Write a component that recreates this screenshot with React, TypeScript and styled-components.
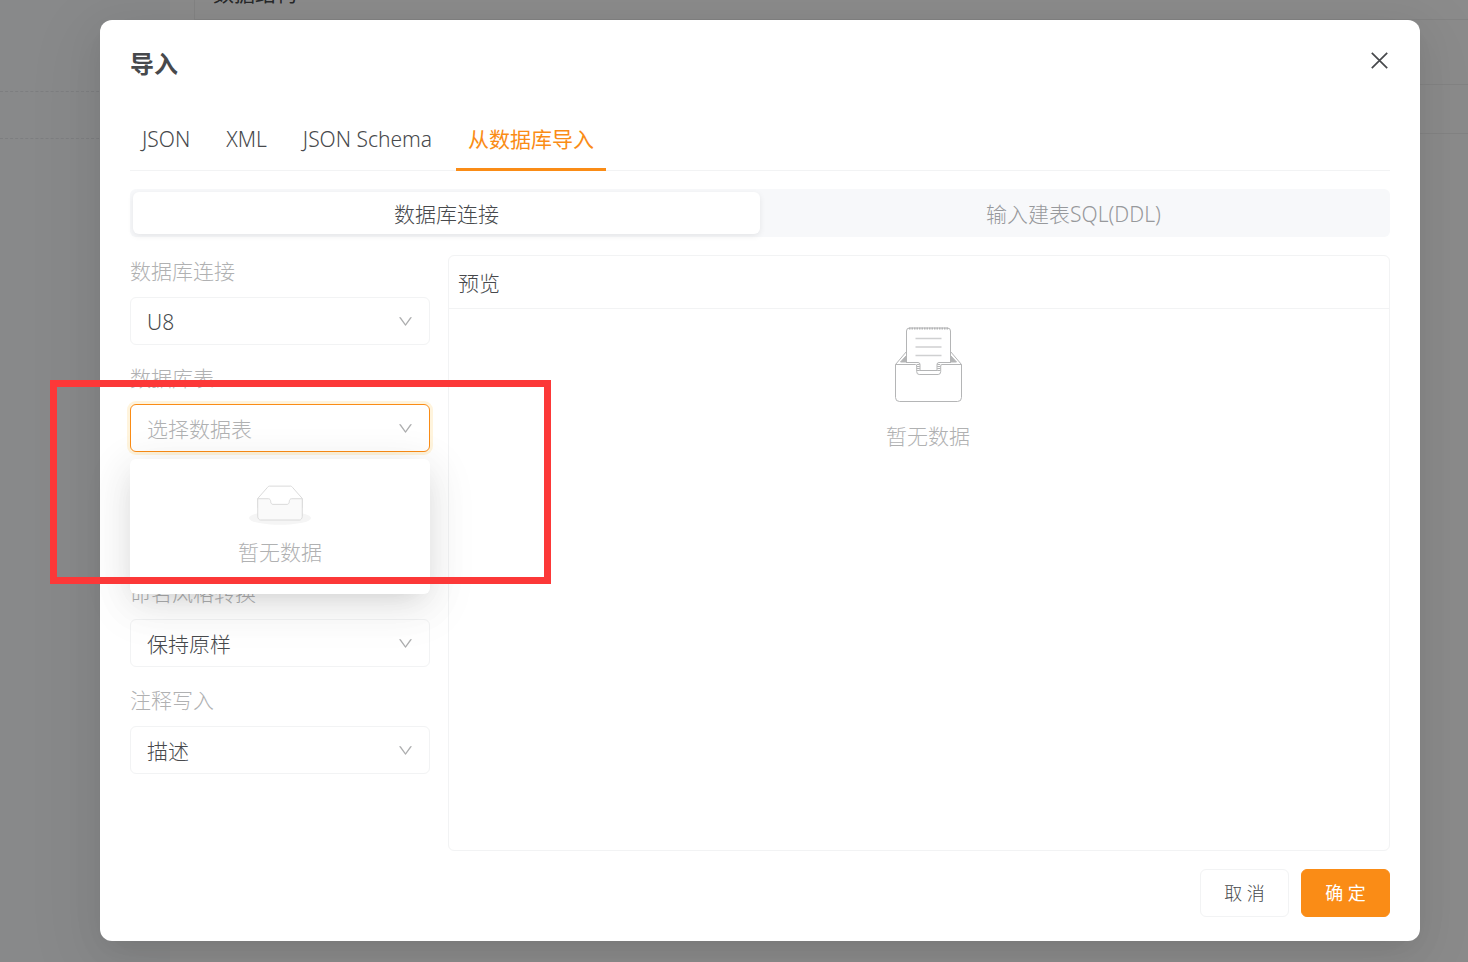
import React, { useState } from "react";
import styled, { createGlobalStyle, css } from "styled-components";

const color = {
  text: "#47494c",
  muted: "#b0b1b2",
  line: "#f2f3f4",
  accent: "#fa8c16",
  track: "#f7f8fa",
};

const GlobalStyle = createGlobalStyle`
  *, *::before, *::after { box-sizing: border-box; }
  body {
    margin: 0;
    color: ${color.text};
    font-family: "Noto Sans", "Noto Sans CJK SC", sans-serif;
    font-size: 21px;
    font-weight: 300;
    line-height: 32px;
  }
  button, select, input { font: inherit; color: inherit; }
`;

const Page = styled.div`
  position: relative;
  display: flex;
  min-height: 100vh;
  overflow: hidden;
`;

const Sidebar = styled.aside`
  flex: none;
  width: 170px;
  padding-top: 91px;
  background: #f7f9fc;
`;

const SidebarRow = styled.div`
  height: 47px;
  border-top: 1px dashed #e4e6e9;

  & + & { height: 1px; }
`;

const Main = styled.main`
  flex: 1;
  padding: 0 0 24px 24px;
  background: #fefefe;
`;

const Sheet = styled.section`
  height: 100%;
  border-left: 1px solid #efefef;
`;

const SheetTitle = styled.div`
  display: flex;
  align-items: flex-end;
  height: 20px;
  padding: 0 0 10px 18px;
  font-weight: 400;
  border-bottom: 1px solid #efefef;
`;

const SheetRow = styled.div<{ $tall?: boolean }>`
  height: ${(p) => (p.$tall ? 65 : 49)}px;
  border-bottom: 1px solid #efefef;
`;

const Overlay = styled.div`
  position: absolute;
  inset: 0;
  display: flex;
  padding: 20px 48px 21px 100px;
  background: rgba(0, 0, 0, 0.45);
`;

const Dialog = styled.div`
  flex: 1;
  display: flex;
  flex-direction: column;
  padding: 29px 30px 24px;
  border-radius: 12px;
  background: #fff;
  box-shadow: 0 9px 24px -12px rgba(0, 0, 0, 0.1), 0 12px 42px rgba(0, 0, 0, 0.06),
    0 18px 72px 24px rgba(0, 0, 0, 0.03);
`;

const DialogHeader = styled.header`
  display: flex;
  justify-content: space-between;
  align-items: flex-start;
  height: 30px;
`;

const Title = styled.h1`
  margin: 0;
  font-size: 24px;
  font-weight: 700;
  line-height: 30px;
`;

const CloseButton = styled.button`
  display: flex;
  padding: 3px 2px;
  border: 0;
  background: none;
`;

const Tabs = styled.div`
  display: flex;
  gap: 12px;
  margin-top: 30px;
  box-shadow: inset 0 -1px ${color.line};
`;

const Tab = styled.button<{ $active: boolean }>`
  padding: 14px 12px 13px;
  border: 0;
  border-bottom: 3px solid ${(p) => (p.$active ? color.accent : "transparent")};
  background: none;
  line-height: 32px;
  ${(p) => p.$active && css`color: ${color.accent}; font-weight: 400;`}
`;

const Segments = styled.div`
  display: flex;
  margin-top: 18px;
  padding: 3px;
  border-radius: 6px;
  background: ${color.track};
`;

const Segment = styled.label<{ $active: boolean }>`
  flex: 1 1 0;
  display: flex;
  justify-content: center;
  align-items: center;
  height: 42px;
  padding-top: 2px;
  border-radius: 6px;
  color: #97999c;
  ${(p) =>
    p.$active &&
    css`
      color: ${color.text};
      background: #fff;
      box-shadow: 0 2px 6px rgba(0, 0, 0, 0.08);
    `}

  input { position: absolute; opacity: 0; pointer-events: none; }
`;

const Body = styled.div`
  flex: 1;
  display: flex;
  gap: 18px;
  margin-top: 18px;
`;

const Form = styled.form`
  flex: none;
  width: 300px;
`;

const Field = styled.div`
  position: relative;
  margin-bottom: 17px;
`;

const FieldLabel = styled.label`
  display: block;
  padding-bottom: 10px;
  color: ${color.muted};
`;

const FieldGap = styled.div`
  height: 108px;
`;

const SelectBox = styled.div<{ $open?: boolean }>`
  display: flex;
  align-items: center;
  height: 48px;
  border: 1px solid ${(p) => (p.$open ? color.accent : color.line)};
  border-radius: 6px;
  background: #fff;
  ${(p) => p.$open && css`box-shadow: 0 0 0 3px #fff4dd;`}

  svg { flex: none; margin: 0 16px 0 -31px; pointer-events: none; }
`;

const Select = styled.select<{ $placeholder?: boolean }>`
  flex: 1;
  height: 46px;
  padding: 1px 40px 0 16px;
  border: 0;
  outline: 0;
  appearance: none;
  background: none;
  color: ${(p) => (p.$placeholder ? color.muted : color.text)};
`;

const Dropdown = styled.div`
  position: absolute;
  z-index: 1;
  top: 100%;
  left: 0;
  right: 0;
  display: flex;
  flex-direction: column;
  align-items: center;
  gap: 11px;
  height: 135px;
  margin-top: 7px;
  padding-top: 26px;
  border-radius: 6px;
  color: ${color.muted};
  background: #fff;
  box-shadow: 0 9px 24px -12px rgba(0, 0, 0, 0.12), 0 9px 42px rgba(0, 0, 0, 0.08),
    0 12px 48px 12px rgba(0, 0, 0, 0.04);
`;

const Preview = styled.section`
  flex: 1;
  border: 1px solid ${color.line};
  border-radius: 6px;
`;

const PreviewHeader = styled.h2`
  margin: 0;
  padding: 11px 9px 9px;
  border-bottom: 1px solid ${color.line};
  font-size: 21px;
  font-weight: 300;
  line-height: 32px;
`;

const PreviewEmpty = styled.div`
  display: flex;
  flex-direction: column;
  align-items: center;
  gap: 17px;
  padding: 18px 0 0 18px;
  color: ${color.muted};
`;

const Footer = styled.footer`
  display: flex;
  justify-content: flex-end;
  gap: 12px;
  margin-top: 18px;
`;

const Button = styled.button<{ $primary?: boolean }>`
  width: 89px;
  height: 48px;
  padding: 0;
  border: 1px solid ${(p) => (p.$primary ? color.accent : color.line)};
  border-radius: 6px;
  background: ${(p) => (p.$primary ? color.accent : "#fff")};
  color: ${(p) => (p.$primary ? "#fff" : color.text)};
  font-size: 18px;
  font-weight: ${(p) => (p.$primary ? 400 : 300)};
`;

const Highlight = styled.div`
  position: absolute;
  z-index: 2;
  top: 380px;
  left: 50px;
  width: 501px;
  height: 204px;
  border: 7px solid #fc3838;
  pointer-events: none;
`;

const Chevron = () => (
  <svg width="15" height="15" viewBox="64 64 896 896" fill="#adaeaf" aria-hidden="true">
    <path d="M884 256h-75c-5.1 0-9.9 2.5-12.9 6.6L512 654.2 227.9 262.6c-3-4.1-7.8-6.6-12.9-6.6h-75c-6.5 0-10.3 7.4-6.5 12.7l352.6 486.1c12.8 17.6 39 17.6 51.7 0l352.6-486.1c3.9-5.3.1-12.7-6.4-12.7z" />
  </svg>
);

const CloseIcon = () => (
  <svg width="17" height="17" viewBox="0 0 17 17" fill="none" stroke="#47494c" strokeWidth="1.7" aria-hidden="true">
    <path d="M0.8 0.8l15.4 15.4M16.2 0.8L0.8 16.2" />
  </svg>
);

const TrayIcon = () => (
  <svg width="62" height="40" viewBox="0 0 64 41" aria-hidden="true">
    <g transform="translate(0 1)" fill="none">
      <ellipse fill="#f5f5f5" cx="32" cy="33" rx="32" ry="7" />
      <g stroke="#d9d9d9">
        <path d="M55 12.76L44.854 1.258C44.367.474 43.656 0 42.907 0H21.093c-.749 0-1.46.474-1.947 1.257L9 12.761V22h46v-9.24z" fill="#fff" />
        <path d="M41.613 15.931c0-1.605.994-2.93 2.227-2.931H55v18.137C55 33.26 53.68 35 52.05 35h-40.1C10.32 35 9 33.259 9 31.137V13h11.16c1.233 0 2.227 1.323 2.227 2.928v.022c0 1.605 1.005 2.901 2.237 2.901h14.752c1.232 0 2.237-1.308 2.237-2.913v-.007z" fill="#fafafa" />
      </g>
    </g>
  </svg>
);

const PaperTrayIcon = () => (
  <svg width="68" height="76" viewBox="0 0 68 76" fill="none" stroke="#b4b5b6" aria-hidden="true">
    <path d="M12.5 24.5L1.5 37.5V70.5a4 4 0 0 0 4 4h58a4 4 0 0 0 4-4V37.5L56.500 24.5" />
    <path d="M12.5 36V4q0-3 3-3h38q3 0 3 3v32" />
    <path d="M15 1.5h39" strokeWidth="2" strokeDasharray="1.5 1" />
    <path d="M6.500 35l6-6.500v6.500zM62.500 35l-6-6.500v6.500z" fill="#b4b5b6" />
    <path d="M21.500 11.500h26M21.500 20h26M21.500 28.500h26" stroke="#cfd0d1" strokeWidth="1.400" />
    <path d="M1.500 37.500h20q1.200 0 1.200 1.500v5.500q0 3 2.500 3h19q2.500 0 2.500-3v-5.500q0-1.500 1.200-1.500h19.600" />
    <path d="M12.500 35.500h11.500q2 0 2 2v6h17v-6q0-2 2-2h11.500" />
    <path d="M24.300 37v8M44.700 37v8" strokeWidth="3" strokeDasharray="1 1" />
  </svg>
);

const tabs = ["JSON", "XML", "JSON Schema", "从数据库导入"];
const segments = ["数据库连接", "输入建表SQL(DDL)"];

type SelectFieldProps = {
  id: string;
  label: string;
  value: string;
  open?: boolean;
};

const SelectField = ({ id, label, value, open }: SelectFieldProps) => (
  <Field>
    <FieldLabel htmlFor={id}>{label}</FieldLabel>
    <SelectBox $open={open}>
      <Select id={id} $placeholder={open}>
        <option>{value}</option>
      </Select>
      <Chevron />
    </SelectBox>
    {open && (
      <Dropdown>
        <TrayIcon />
        <span>暂无数据</span>
      </Dropdown>
    )}
  </Field>
);

export default function App() {
  const [tab, setTab] = useState(tabs[3]);
  const [segment, setSegment] = useState(segments[0]);

  return (
    <>
      <GlobalStyle />
      <Page>
        <Sidebar>
          <SidebarRow />
          <SidebarRow />
        </Sidebar>
        <Main>
          <Sheet>
            <SheetTitle>数据结构</SheetTitle>
            <SheetRow $tall />
            <SheetRow />
          </Sheet>
        </Main>
        <Overlay>
          <Dialog role="dialog" aria-labelledby="dialog-title">
            <DialogHeader>
              <Title id="dialog-title">导入</Title>
              <CloseButton type="button" aria-label="关闭">
                <CloseIcon />
              </CloseButton>
            </DialogHeader>
            <Tabs role="tablist">
              {tabs.map((name) => (
                <Tab
                  key={name}
                  type="button"
                  role="tab"
                  aria-selected={tab === name}
                  $active={tab === name}
                  onClick={() => setTab(name)}
                >
                  {name}
                </Tab>
              ))}
            </Tabs>
            <Segments role="radiogroup">
              {segments.map((name) => (
                <Segment key={name} $active={segment === name}>
                  <input
                    type="radio"
                    name="source"
                    checked={segment === name}
                    onChange={() => setSegment(name)}
                  />
                  {name}
                </Segment>
              ))}
            </Segments>
            <Body>
              <Form>
                <SelectField id="connection" label="数据库连接" value="U8" />
                <SelectField id="table" label="数据库表" value="选择数据表" open />
                <FieldGap />
                <SelectField id="naming" label="命名风格转换" value="保持原样" />
                <SelectField id="comment" label="注释写入" value="描述" />
              </Form>
              <Preview>
                <PreviewHeader>预览</PreviewHeader>
                <PreviewEmpty>
                  <PaperTrayIcon />
                  <span>暂无数据</span>
                </PreviewEmpty>
              </Preview>
            </Body>
            <Footer>
              <Button type="button">取 消</Button>
              <Button type="button" $primary>确 定</Button>
            </Footer>
          </Dialog>
        </Overlay>
        <Highlight />
      </Page>
    </>
  );
}
